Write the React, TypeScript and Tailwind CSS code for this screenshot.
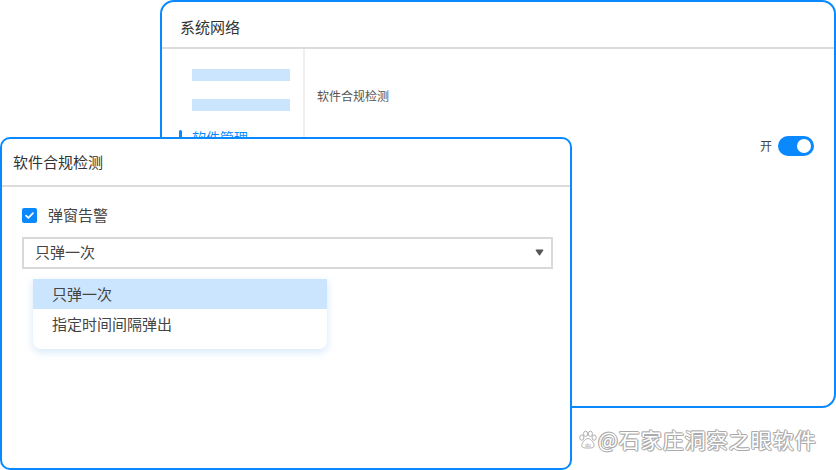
import React from 'react';

const FONT = "font-['Noto_Sans_CJK_SC','Noto_Sans',sans-serif]";

function Toggle() {
    return (
        <div className="flex items-center gap-[6px]">
            <span className="text-[12px] leading-none text-[#444]">开</span>
            <div className="flex h-[20px] w-[36px] items-center justify-end rounded-full bg-[#0a89ff] pr-[3px]">
                <div className="h-[14px] w-[14px] rounded-full bg-white" />
            </div>
        </div>
    );
}

function BackWindow() {
    return (
        <div className="absolute left-[160px] top-0 flex h-[408px] w-[676px] flex-col overflow-hidden rounded-[14px] border-2 border-[#0a89ff] bg-white">
            {/* Header */}
            <div className="flex h-[47px] shrink-0 items-center border-b-2 border-[#dcdcdc] pl-[18px] pt-[5px]">
                <span className="text-[15px] text-[#333]">系统网络</span>
            </div>

            <div className="flex flex-1">
                {/* Sidebar */}
                <div className="flex w-[143px] shrink-0 flex-col border-r-2 border-[#efefef] pt-[20px]">
                    <div className="ml-[30px] h-[12px] w-[98px] bg-[#cce5ff]" />
                    <div className="ml-[30px] mt-[18px] h-[12px] w-[98px] bg-[#cce5ff]" />
                    <div className="mt-[16px] flex items-center gap-[10px] pl-[17px]">
                        <div className="h-[16px] w-[3px] rounded-sm bg-[#0a89ff]" />
                        <span className="text-[14px] text-[#0a89ff]">软件管理</span>
                    </div>
                </div>

                {/* Content */}
                <div className="flex flex-1 flex-col pl-[12px] pr-[20px] pt-[38px]">
                    <span className="text-[12px] text-[#555]">软件合规检测</span>
                    <div className="mt-[31px] flex justify-end">
                        <Toggle />
                    </div>
                </div>
            </div>
        </div>
    );
}

function FrontWindow() {
    return (
        <div className="absolute left-0 top-[137px] flex h-[333px] w-[572px] flex-col rounded-[10px] border-2 border-[#0a89ff] bg-white">
            {/* Header */}
            <div className="flex h-[48px] shrink-0 items-center border-b-2 border-[#dcdcdc] pl-[11px]">
                <span className="text-[15px] text-[#333]">软件合规检测</span>
            </div>

            <div className="relative flex flex-col pl-[20px] pr-[17px] pt-[17px]">
                {/* Checkbox row */}
                <label className="flex items-center gap-[11px]">
                    <span className="flex h-[15px] w-[15px] items-center justify-center rounded-[2px] bg-[#0a89ff]">
                        <svg viewBox="0 0 12 12" className="h-[11px] w-[11px]" fill="none">
                            <path d="M2.2 6.2 L4.8 8.6 L9.8 3.4" stroke="white" strokeWidth="1.8" strokeLinecap="round" strokeLinejoin="round" />
                        </svg>
                    </span>
                    <span className="text-[15px] text-[#444]">弹窗告警</span>
                </label>

                {/* Select */}
                <div className="mt-[10px] flex h-[32px] items-center justify-between border-2 border-[#d9d9d9] pl-[11px] pr-[6px]">
                    <span className="text-[15px] text-[#444]">只弹一次</span>
                    <svg viewBox="0 0 10 8" className="h-[7px] w-[11px]">
                        <path d="M0.5 1.5 Q0.5 0.5 1.5 0.5 L8.5 0.5 Q9.5 0.5 9.5 1.5 L5.6 7 Q5 7.6 4.4 7 Z" fill="#555" />
                    </svg>
                </div>

                {/* Dropdown menu */}
                <div className="absolute left-[31px] top-[92px] w-[294px] overflow-hidden rounded-b-[8px] bg-white pb-[10px] shadow-[0_3px_8px_rgba(24,120,220,0.18)]">
                    <div className="flex h-[30px] items-center bg-[#cce5ff] pl-[19px] text-[15px] text-[#444]">只弹一次</div>
                    <div className="flex h-[30px] items-center pl-[19px] text-[15px] text-[#444]">指定时间间隔弹出</div>
                </div>
            </div>
        </div>
    );
}

function Watermark() {
    return (
        <div className="absolute left-[578px] top-[424px] flex items-center gap-[1px]">
            <svg viewBox="0 0 20 20" className="h-[19px] w-[19px]">
                <g fill="white" stroke="#aaa" strokeWidth="1">
                    <ellipse cx="4" cy="8" rx="2.2" ry="2.8" />
                    <ellipse cx="8" cy="4" rx="2.2" ry="2.8" />
                    <ellipse cx="13" cy="4" rx="2.2" ry="2.8" />
                    <ellipse cx="17" cy="8" rx="2.2" ry="2.8" />
                    <path d="M10.5 9 C7 9 4 14 4 16.5 C4 18.5 6 19 10.5 19 C15 19 17 18.5 17 16.5 C17 14 14 9 10.5 9 Z" />
                </g>
                <text x="10.5" y="17.5" textAnchor="middle" fontSize="5" fill="#999" fontFamily="Liberation Sans, sans-serif">du</text>
            </svg>
            <span className="text-[21px] tracking-[1px] text-white [text-shadow:1px_0_#aaa,-1px_0_#aaa,0_1px_#aaa,0_-1px_#aaa,1px_1px_#bbb,-1px_-1px_#bbb]">
                @石家庄洞察之眼软件
            </span>
        </div>
    );
}

export default function App() {
    return (
        <div className={`relative h-[470px] w-[836px] overflow-hidden bg-white ${FONT}`}>
            <BackWindow />
            <FrontWindow />
            <Watermark />
        </div>
    );
}
